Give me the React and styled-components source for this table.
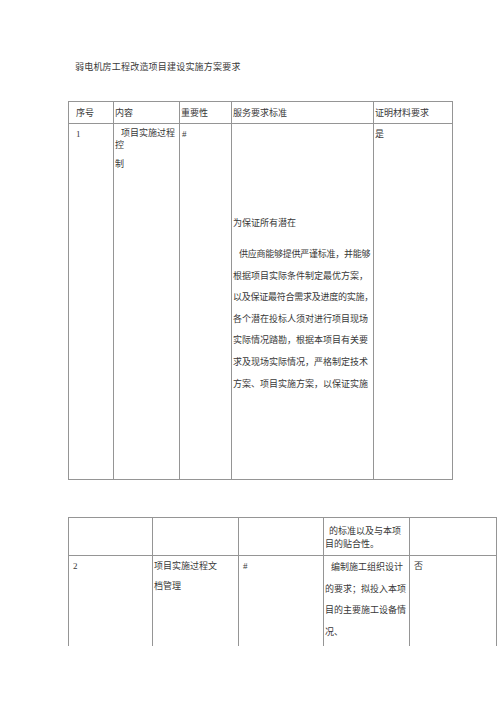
import React from "react";
import styled, { createGlobalStyle } from "styled-components";

const GlobalStyle = createGlobalStyle`
	html, body {
		margin: 0;
		padding: 0;
		background: #ffffff;
	}
	body {
		font-family: "Liberation Serif", "Noto Sans CJK SC", serif;
		color: #383838;
	}
`;

const Page = styled.div`
	width: 500px;
	height: 707px;
	box-sizing: border-box;
	padding: 60px 0 0 68px;
	overflow: hidden;
`;

const Title = styled.div`
	margin-left: 7px;
	font-size: 9px;
	line-height: 14px;
	letter-spacing: 0.2px;
	white-space: nowrap;
`;

const Table = styled.table`
	border-collapse: collapse;
	table-layout: fixed;
	width: ${(p) => p.$width}px;
	margin-top: ${(p) => p.$gap}px;
	font-size: 9px;

	td {
		border: 1px solid #959595;
		padding: 0;
		vertical-align: top;
	}
`;

const HeadCell = styled.td`
	&& {
		height: 21px;
		vertical-align: middle;
		padding-left: ${(p) => p.$pad || 1}px;
		white-space: nowrap;
	}
`;

const Cell = styled.td`
	&& {
		padding-left: ${(p) => p.$pad || 1}px;
		padding-top: ${(p) => p.$top || 0}px;
		height: ${(p) => p.$h || "auto"};
		${(p) => p.$open && "border-bottom: none;"}
	}
`;

const Line = styled.div`
	line-height: ${(p) => p.$lh || 14}px;
	white-space: nowrap;
	padding-left: ${(p) => p.$indent || 0}px;
	margin-top: ${(p) => p.$mt || 0}px;
	letter-spacing: ${(p) => (p.$tight ? "-0.25px" : "0")};
`;

const serviceLines = [
	"根据项目实际条件制定最优方案，",
	"以及保证最符合需求及进度的实施，",
	"各个潜在投标人须对进行项目现场",
	"实际情况踏勘，根据本项目有关要",
	"求及现场实际情况，严格制定技术",
	"方案、项目实施方案，以保证实施",
];

const docLines = ["的要求；拟投入本项", "目的主要施工设备情", "况、"];

export default function App() {
	return (
		<Page>
			<GlobalStyle />
			<Title>弱电机房工程改造项目建设实施方案要求</Title>

			<Table $width={384} $gap={27}>
				<colgroup>
					<col style={{ width: 45 }} />
					<col style={{ width: 66 }} />
					<col style={{ width: 52 }} />
					<col style={{ width: 142 }} />
					<col style={{ width: 79 }} />
				</colgroup>
				<tbody>
					<tr>
						<HeadCell $pad={7}>序号</HeadCell>
						<HeadCell>内容</HeadCell>
						<HeadCell>重要性</HeadCell>
						<HeadCell>服务要求标准</HeadCell>
						<HeadCell>证明材料要求</HeadCell>
					</tr>
					<tr>
						<Cell $pad={7} $top={3} $h="352px">
							<Line>1</Line>
						</Cell>
						<Cell $top={3}>
							<Line $lh={12} $indent={6}>项目实施过程</Line>
							<Line $lh={12}>控</Line>
							<Line $lh={12} $mt={7}>制</Line>
						</Cell>
						<Cell $pad={2} $top={3}>
							<Line>#</Line>
						</Cell>
						<Cell>
							<Line $lh={21.6} $mt={89}>为保证所有潜在</Line>
							<Line $lh={21.6} $mt={9.4} $indent={6} $tight>
								供应商能够提供严谨标准，并能够
							</Line>
							{serviceLines.map((t) => (
								<Line key={t} $lh={21.6} $tight={t.length > 15}>
									{t}
								</Line>
							))}
						</Cell>
						<Cell $top={3}>
							<Line>是</Line>
						</Cell>
					</tr>
				</tbody>
			</Table>

			<Table $width={428} $gap={37}>
				<colgroup>
					<col style={{ width: 84 }} />
					<col style={{ width: 86 }} />
					<col style={{ width: 85 }} />
					<col style={{ width: 86 }} />
					<col style={{ width: 87 }} />
				</colgroup>
				<tbody>
					<tr>
						<Cell $h="37px" />
						<Cell />
						<Cell />
						<Cell $top={7}>
							<Line $lh={13} $indent={4}>的标准以及与本项</Line>
							<Line $lh={13}>目的贴合性。</Line>
						</Cell>
						<Cell />
					</tr>
					<tr>
						<Cell $open $pad={4} $h="90px">
							<Line $lh={20}>2</Line>
						</Cell>
						<Cell $open>
							<Line $lh={20}>项目实施过程文</Line>
							<Line $lh={20}>档管理</Line>
						</Cell>
						<Cell $open $pad={4}>
							<Line $lh={20}>#</Line>
						</Cell>
						<Cell $open $top={1}>
							<Line $lh={21.5} $indent={6}>编制施工组织设计</Line>
							{docLines.map((t) => (
								<Line key={t} $lh={21.5}>
									{t}
								</Line>
							))}
						</Cell>
						<Cell $open $pad={4}>
							<Line $lh={20}>否</Line>
						</Cell>
					</tr>
				</tbody>
			</Table>
		</Page>
	);
}
